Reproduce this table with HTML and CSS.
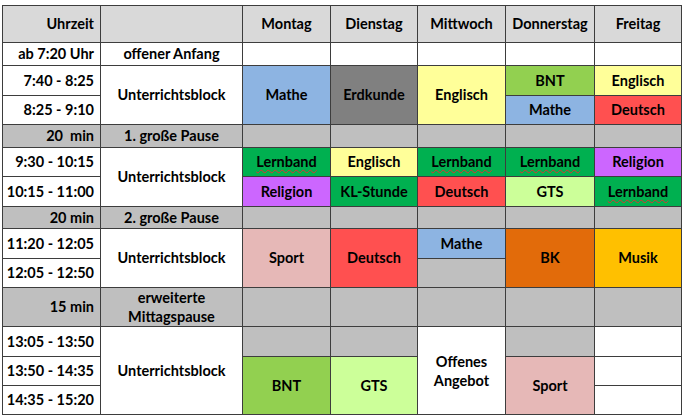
FILE: index.html
```html
<!DOCTYPE html>
<html lang="de">
<head>
<meta charset="utf-8">
<title>Stundenplan</title>
<link rel="stylesheet" href="styles.css">
</head>
<body>
<table class="plan">
  <colgroup>
    <col class="c-time">
    <col class="c-block">
    <col class="c-mo">
    <col class="c-di">
    <col class="c-mi">
    <col class="c-do">
    <col class="c-fr">
  </colgroup>
  <tr class="r-head">
    <td class="time head">Uhrzeit</td>
    <td class="head"></td>
    <td class="head">Montag</td>
    <td class="head">Dienstag</td>
    <td class="head">Mittwoch</td>
    <td class="head">Donnerstag</td>
    <td class="head">Freitag</td>
  </tr>
  <tr class="r-23">
    <td class="time">ab 7:20 Uhr</td>
    <td>offener Anfang</td>
    <td></td><td></td><td></td><td></td><td></td>
  </tr>
  <tr class="r-30">
    <td class="time">7:40 - 8:25</td>
    <td rowspan="2">Unterrichtsblock</td>
    <td rowspan="2" class="mathe">Mathe</td>
    <td rowspan="2" class="erdkunde">Erdkunde</td>
    <td rowspan="2" class="englisch">Englisch</td>
    <td class="bnt">BNT</td>
    <td class="englisch">Englisch</td>
  </tr>
  <tr class="r-29">
    <td class="time">8:25 - 9:10</td>
    <td class="mathe">Mathe</td>
    <td class="deutsch">Deutsch</td>
  </tr>
  <tr class="r-23 pause">
    <td class="time">20&nbsp; min</td>
    <td>1. große Pause</td>
    <td></td><td></td><td></td><td></td><td></td>
  </tr>
  <tr class="r-29">
    <td class="time">9:30 - 10:15</td>
    <td rowspan="2">Unterrichtsblock</td>
    <td class="lernband"><span class="spell">Lernband</span></td>
    <td class="englisch">Englisch</td>
    <td class="lernband"><span class="spell">Lernband</span></td>
    <td class="lernband"><span class="spell">Lernband</span></td>
    <td class="religion">Religion</td>
  </tr>
  <tr class="r-30">
    <td class="time">10:15 - 11:00</td>
    <td class="religion">Religion</td>
    <td class="lernband">KL-Stunde</td>
    <td class="deutsch">Deutsch</td>
    <td class="gts">GTS</td>
    <td class="lernband"><span class="spell">Lernband</span></td>
  </tr>
  <tr class="r-22 pause">
    <td class="time">20 min</td>
    <td>2. große Pause</td>
    <td></td><td></td><td></td><td></td><td></td>
  </tr>
  <tr class="r-30">
    <td class="time">11:20 - 12:05</td>
    <td rowspan="2">Unterrichtsblock</td>
    <td rowspan="2" class="sport">Sport</td>
    <td rowspan="2" class="deutsch">Deutsch</td>
    <td class="mathe">Mathe</td>
    <td rowspan="2" class="bk">BK</td>
    <td rowspan="2" class="musik">Musik</td>
  </tr>
  <tr class="r-29">
    <td class="time">12:05 - 12:50</td>
    <td class="grey"></td>
  </tr>
  <tr class="r-39 pause">
    <td class="time">15 min</td>
    <td class="two">erweiterte<br>Mittagspause</td>
    <td></td><td></td><td></td><td></td><td></td>
  </tr>
  <tr class="r-30">
    <td class="time">13:05 - 13:50</td>
    <td rowspan="3">Unterrichtsblock</td>
    <td class="grey"></td>
    <td class="grey"></td>
    <td rowspan="3" class="two">Offenes<br>Angebot</td>
    <td class="grey"></td>
    <td></td>
  </tr>
  <tr class="r-29">
    <td class="time">13:50 - 14:35</td>
    <td rowspan="2" class="bnt">BNT</td>
    <td rowspan="2" class="gts">GTS</td>
    <td rowspan="2" class="sport">Sport</td>
    <td></td>
  </tr>
  <tr class="r-29">
    <td class="time">14:35 - 15:20</td>
    <td></td>
  </tr>
</table>
</body>
</html>
```

FILE: styles.css
```css
html, body {
  margin: 0;
  padding: 0;
  background: #ffffff;
}

body {
  padding: 5px 0 0 2px;
}

.plan {
  border-collapse: collapse;
  table-layout: fixed;
  width: 679px;
  font-family: Lato, "Open Sans", sans-serif;
  font-weight: bold;
  font-size: 14.5px;
  color: #000000;
}

.c-time { width: 98px; }
.c-block { width: 142px; }
.c-mo { width: 88px; }
.c-di { width: 87px; }
.c-mi { width: 88px; }
.c-do { width: 89px; }
.c-fr { width: 87px; }

.plan td {
  border: 1px solid #3d3d3d;
  padding: 0 2px;
  text-align: center;
  vertical-align: middle;
  line-height: 18px;
  white-space: nowrap;
  overflow: hidden;
  background: #ffffff;
}

.plan td.time {
  text-align: right;
  padding-right: 6px;
}

.plan td.two {
  line-height: 19px;
}

.r-head { height: 37px; }
.r-22 { height: 22px; }
.r-23 { height: 23px; }
.r-29 { height: 29px; }
.r-30 { height: 30px; }
.r-39 { height: 39px; }

.plan td.head { background: #d9d9d9; }
.plan .pause td,
.plan td.grey { background: #bfbfbf; }

.plan td.mathe { background: #8db4e2; }
.plan td.erdkunde { background: #808080; }
.plan td.englisch { background: #ffff99; }
.plan td.bnt { background: #92d050; }
.plan td.deutsch { background: #ff5050; }
.plan td.lernband { background: #00b050; }
.plan td.religion { background: #cc66ff; }
.plan td.gts { background: #ccff99; }
.plan td.sport { background: #e6b8b7; }
.plan td.bk { background: #e26b0a; }
.plan td.musik { background: #ffc000; }

.spell {
  text-decoration: underline wavy #e03030;
  text-decoration-thickness: 1px;
  text-underline-offset: 2px;
}
```
